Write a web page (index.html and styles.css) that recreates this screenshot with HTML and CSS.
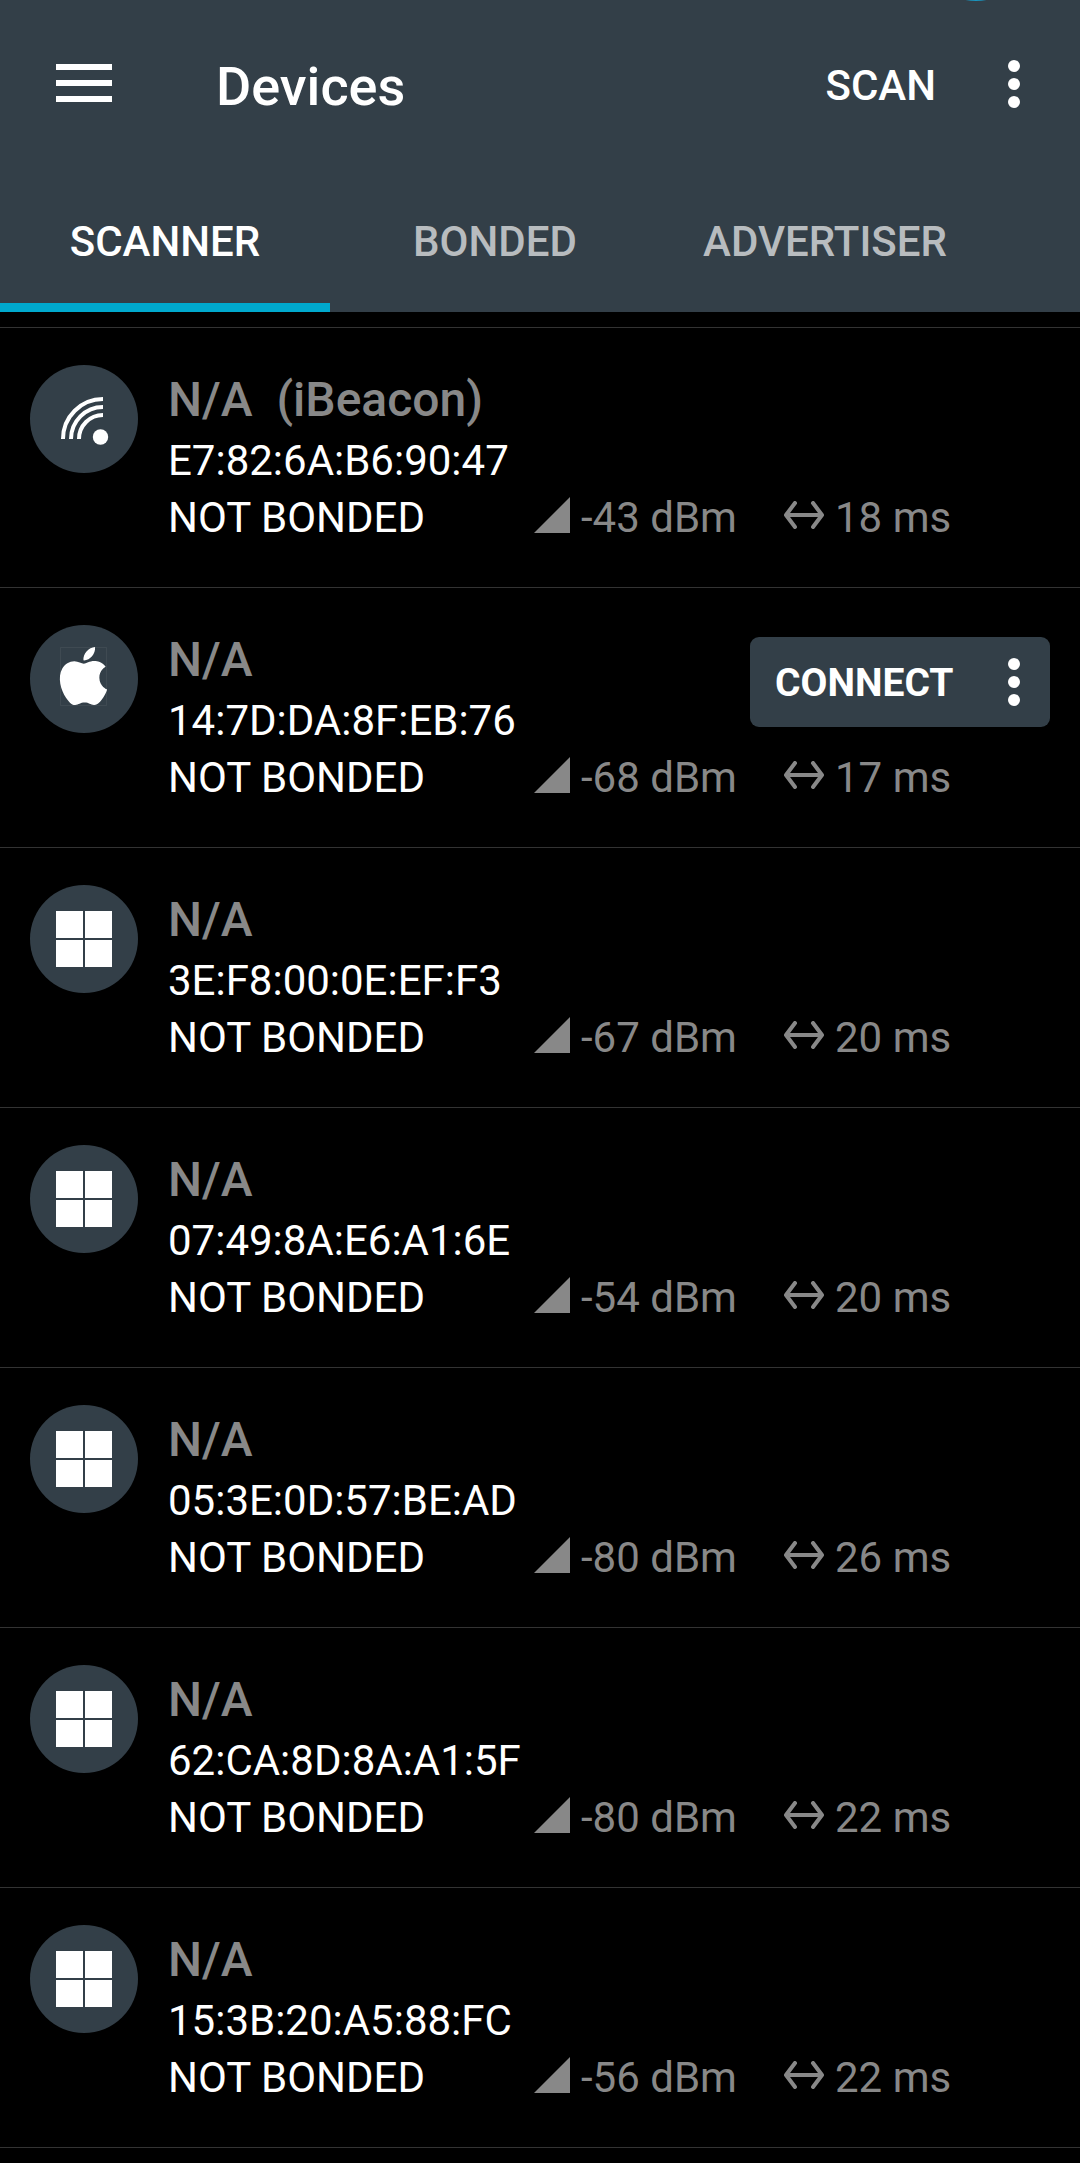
FILE: index.html
```html
<!DOCTYPE html>
<html lang="en">
<head>
<meta charset="utf-8">
<meta name="viewport" content="width=device-width">
<title>Devices</title>
<link rel="stylesheet" href="styles.css">
</head>
<body>
<svg class="sprites" aria-hidden="true">
  <symbol id="dots" viewBox="0 0 12 48"><circle cx="6" cy="6" r="6"/><circle cx="6" cy="24" r="6"/><circle cx="6" cy="42" r="6"/></symbol>
  <symbol id="windows" viewBox="0 0 108 108"><path d="M26 26h27v27H26zM55 26h27v27H55zM26 55h27v27H26zM55 55h27v27H55z"/></symbol>
  <symbol id="signal" viewBox="0 0 36 36"><path d="M36 0v36H0z"/></symbol>
  <symbol id="interval" viewBox="0 0 40 28"><path d="M11 2L2 14l9 12M29 2l9 12-9 12M3 14h34" fill="none" stroke="currentColor" stroke-width="4" stroke-linecap="round" stroke-linejoin="round"/></symbol>
</svg>

<header class="header">
  <span class="bubble"></span>
  <div class="appbar">
    <button class="icon-button menu" aria-label="Menu">
      <svg width="56" height="40" viewBox="0 0 56 40"><path d="M0 0h56v6H0zM0 16h56v6H0zM0 32h56v6H0z"/></svg>
    </button>
    <h1 class="title">Devices</h1>
    <button class="scan">SCAN</button>
    <button class="icon-button" aria-label="More options"><svg width="12" height="48"><use href="#dots"/></svg></button>
  </div>
  <nav class="tabs">
    <a class="tab active" href="#scanner" aria-current="page">SCANNER</a>
    <a class="tab" href="#bonded">BONDED</a>
    <a class="tab" href="#advertiser">ADVERTISER</a>
  </nav>
</header>

<main>
<ul class="devices" id="scanner">
  <li class="device">
    <svg class="avatar" viewBox="0 0 108 108">
      <g fill="none" stroke="currentColor" stroke-width="4"><path d="M33 74a40 40 0 0 1 40-40M41 74a32 32 0 0 1 32-32M49 74a24 24 0 0 1 24-24"/></g>
      <circle cx="70.5" cy="72" r="7.7"/>
    </svg>
    <div class="info">
      <h2 class="name">N/A&nbsp; (iBeacon)</h2>
      <p class="address">E7:82:6A:B6:90:47</p>
      <div class="meta"><span>NOT BONDED</span><span class="stat"><svg width="36" height="36"><use href="#signal"/></svg>-43 dBm</span><span class="stat"><svg width="40" height="28"><use href="#interval"/></svg>18 ms</span></div>
    </div>
  </li>
  <li class="device">
    <svg class="avatar" viewBox="0 0 108 108">
      <path fill="none" stroke="currentColor" stroke-opacity=".06" d="M30.500 22.500h46v58h-46z"/>
      <path transform="translate(24.500 22) scale(2.417)" d="M12.152 6.896c-.948 0-2.415-1.078-3.96-1.04-2.04.027-3.91 1.183-4.961 3.014-2.117 3.675-.546 9.103 1.519 12.09 1.013 1.454 2.208 3.09 3.792 3.039 1.52-.065 2.09-.987 3.935-.987 1.831 0 2.35.987 3.96.948 1.637-.026 2.676-1.48 3.676-2.948 1.156-1.688 1.636-3.325 1.662-3.415-.039-.013-3.182-1.221-3.22-4.857-.026-3.04 2.48-4.494 2.597-4.559-1.429-2.09-3.623-2.324-4.39-2.376-2-.156-3.675 1.09-4.61 1.09zM15.53 3.83c.843-1.012 1.4-2.427 1.245-3.83-1.207.052-2.662.805-3.532 1.818-.78.896-1.454 2.338-1.273 3.714 1.338.104 2.715-.688 3.559-1.701"/>
    </svg>
    <div class="info">
      <h2 class="name">N/A</h2>
      <p class="address">14:7D:DA:8F:EB:76</p>
      <div class="meta"><span>NOT BONDED</span><span class="stat"><svg width="36" height="36"><use href="#signal"/></svg>-68 dBm</span><span class="stat"><svg width="40" height="28"><use href="#interval"/></svg>17 ms</span></div>
    </div>
    <div class="actions">
      <button class="connect">CONNECT</button>
      <button class="icon-button" aria-label="Connection options"><svg width="12" height="48"><use href="#dots"/></svg></button>
    </div>
  </li>
  <li class="device">
    <svg class="avatar"><use href="#windows"/></svg>
    <div class="info">
      <h2 class="name">N/A</h2>
      <p class="address">3E:F8:00:0E:EF:F3</p>
      <div class="meta"><span>NOT BONDED</span><span class="stat"><svg width="36" height="36"><use href="#signal"/></svg>-67 dBm</span><span class="stat"><svg width="40" height="28"><use href="#interval"/></svg>20 ms</span></div>
    </div>
  </li>
  <li class="device">
    <svg class="avatar"><use href="#windows"/></svg>
    <div class="info">
      <h2 class="name">N/A</h2>
      <p class="address">07:49:8A:E6:A1:6E</p>
      <div class="meta"><span>NOT BONDED</span><span class="stat"><svg width="36" height="36"><use href="#signal"/></svg>-54 dBm</span><span class="stat"><svg width="40" height="28"><use href="#interval"/></svg>20 ms</span></div>
    </div>
  </li>
  <li class="device">
    <svg class="avatar"><use href="#windows"/></svg>
    <div class="info">
      <h2 class="name">N/A</h2>
      <p class="address">05:3E:0D:57:BE:AD</p>
      <div class="meta"><span>NOT BONDED</span><span class="stat"><svg width="36" height="36"><use href="#signal"/></svg>-80 dBm</span><span class="stat"><svg width="40" height="28"><use href="#interval"/></svg>26 ms</span></div>
    </div>
  </li>
  <li class="device">
    <svg class="avatar"><use href="#windows"/></svg>
    <div class="info">
      <h2 class="name">N/A</h2>
      <p class="address">62:CA:8D:8A:A1:5F</p>
      <div class="meta"><span>NOT BONDED</span><span class="stat"><svg width="36" height="36"><use href="#signal"/></svg>-80 dBm</span><span class="stat"><svg width="40" height="28"><use href="#interval"/></svg>22 ms</span></div>
    </div>
  </li>
  <li class="device">
    <svg class="avatar"><use href="#windows"/></svg>
    <div class="info">
      <h2 class="name">N/A</h2>
      <p class="address">15:3B:20:A5:88:FC</p>
      <div class="meta"><span>NOT BONDED</span><span class="stat"><svg width="36" height="36"><use href="#signal"/></svg>-56 dBm</span><span class="stat"><svg width="40" height="28"><use href="#interval"/></svg>22 ms</span></div>
    </div>
  </li>
</ul>
</main>
</body>
</html>
```
FILE: styles.css
```css
:root {
  --bar: #333f48;
  --accent: #00a9ce;
  --muted: #888;
  --divider: #333;
}

* { box-sizing: border-box; }

body {
  margin: 0;
  background: #000;
  color: #fff;
  font: 400 42px/57px Roboto, "Liberation Sans", sans-serif;
}

h1, h2, p, ul { margin: 0; padding: 0; }

svg { display: block; flex: none; fill: currentColor; }

.sprites { position: absolute; width: 0; height: 0; }

button {
  border: 0;
  padding: 0;
  background: none;
  color: inherit;
  font: inherit;
  cursor: pointer;
}

.icon-button { display: flex; align-items: center; justify-content: center; }

/* Header */
.header { position: relative; overflow: hidden; background: var(--bar); }

.bubble {
  position: absolute;
  top: -109px;
  right: 49px;
  width: 110px;
  height: 110px;
  border-radius: 50%;
  background: #1a94bd;
}

.appbar {
  display: flex;
  align-items: center;
  height: 168px;
  padding: 0 60px 0 56px;
}

.menu { margin-right: 104px; }

.title { flex: 1; padding-top: 4px; font-size: 54px; font-weight: 500; }

.scan { margin-right: 72px; padding-top: 2px; font-weight: 500; }

.tabs { display: flex; }

.tab {
  display: flex;
  align-items: center;
  justify-content: center;
  min-width: 330px;
  height: 144px;
  padding-top: 2px;
  color: #b8bcbf;
  font-weight: 500;
  text-decoration: none;
}

.tab.active { color: #fff; box-shadow: inset 0 -9px var(--accent); }

/* Device list */
.devices { margin-top: 15px; border-top: 1px solid var(--divider); list-style: none; }

.device {
  position: relative;
  display: flex;
  gap: 30px;
  padding: 37px 30px 41px;
  border-bottom: 1px solid var(--divider);
}

.avatar { width: 108px; height: 108px; border-radius: 50%; background: var(--bar); }

.info { flex: 1; padding-top: 3px; }

.name { color: var(--muted); font-size: 48px; font-weight: 500; line-height: 64px; }

.meta { display: grid; grid-template-columns: 366px 250px auto; }

.stat { display: flex; align-items: center; gap: 11px; color: var(--muted); }

.stat svg { margin-bottom: 6px; }

/* The action pill floats over the end of the row */
.actions {
  position: absolute;
  top: 49px;
  right: 30px;
  display: flex;
  align-items: center;
  justify-content: space-between;
  width: 300px;
  height: 90px;
  padding: 0 30px 0 25px;
  border-radius: 9px;
  background: var(--bar);
}

.connect { padding-top: 3px; font-size: 39px; font-weight: 700; }
```
